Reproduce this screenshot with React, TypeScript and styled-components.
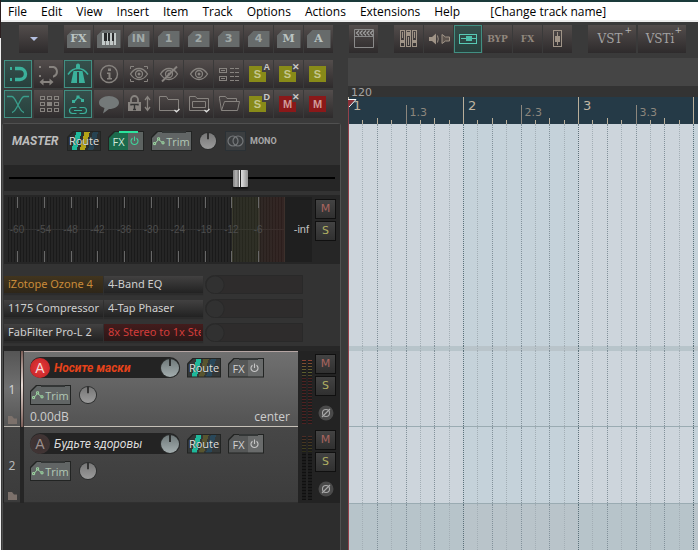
import React, { useEffect, useState } from "react";
import styled, { createGlobalStyle, css } from "styled-components";

const UI = `"Noto Sans", "Open Sans", sans-serif`;
const MENU = `"Open Sans", "Noto Sans", sans-serif`;
const WIDE = `"DejaVu Sans", sans-serif`;
const ARIAL = `"Liberation Sans", Arial, sans-serif`;
const NARROW = `Roboto, "Liberation Sans", sans-serif`;
const SERIF = `"DejaVu Serif", serif`;

const GlobalStyle = createGlobalStyle`
  * { box-sizing: border-box; }
  body { margin: 0; background: #2d2d2d; font-family: ${UI}; font-size: 12px; }
  button, input { font: inherit; color: inherit; margin: 0; padding: 0; border: 0; background: none; }
  button { cursor: pointer; }
  svg { display: block; }
`;

/* ---------- page frame ---------- */

const Page = styled.div`
  min-height: 100vh;
  display: flex;
  flex-direction: column;
  padding-left: 1px;
  overflow: hidden;
  background: linear-gradient(#2b1f20 38px, #f0f0f0 38px);
`;

const MenuBar = styled.nav`
  display: flex;
  gap: 14px;
  height: 22px;
  padding-left: 7px;
  border-top: 2px solid #1a3a3a;
  border-bottom: 2px solid #ededed;
  background: #fff;
  color: #000;
  font-family: ${MENU};
  overflow: hidden;
`;

const MenuItem = styled.button<{ $wide?: boolean }>`
  line-height: 20px;
  height: 20px;
  white-space: nowrap;
  margin-left: ${(p) => (p.$wide ? "16px" : "0")};
`;

const Toolbar = styled.div`
  display: flex;
  gap: 16px;
  height: 36px;
  padding: 3px 8px 0 18px;
  background: #3a3a3a;
  overflow: hidden;
`;

const Group = styled.div<{ $gap?: number }>`
  display: flex;
  gap: ${(p) => p.$gap ?? 1}px;
`;

const Workspace = styled.main`
  flex: 1;
  display: grid;
  grid-template-columns: 347px minmax(0, 1fr);
  background: #3a3a3a;
`;

const Left = styled.div`
  display: flex;
  flex-direction: column;
`;

const ActionGrid = styled.div`
  display: grid;
  grid-template-columns: repeat(11, 29px);
  gap: 2px 1px;
  padding: 2px 0 5px 3px;
`;

const ToolButton = styled.button<{ $on?: boolean; $w?: number }>`
  position: relative;
  display: flex;
  align-items: center;
  justify-content: center;
  flex: none;
  width: ${(p) => p.$w ?? 29}px;
  height: 28px;
  color: #87837f;
  background: linear-gradient(#534d4c, #2e2b2c);
  ${(p) =>
    p.$on &&
    css`
      width: 28px;
      color: #3bb09b;
      background: linear-gradient(#36504c, #26403c);
      box-shadow: inset 0 0 0 1px #418f82;
    `}
`;

const Plate = styled.span<{ $face?: "serif" | "sans"; $small?: boolean }>`
  display: flex;
  align-items: center;
  justify-content: center;
  width: ${(p) => (p.$small ? 22 : 24)}px;
  height: ${(p) => (p.$small ? 16 : 18)}px;
  background: #676b6b;
  color: ${(p) => (p.$small ? "#a0a8a7" : "#bac4c2")};
  clip-path: polygon(6px 0, 100% 0, 100% 100%, 0 100%, 0 6px);
  font: bold 11px/16px ${(p) => (p.$face === "sans" ? WIDE : SERIF)};
`;

const ToolText = styled.span`
  font: bold 9px/28px ${SERIF};
  color: #91877d;
`;

const VstText = styled.span`
  font: 12px/28px ${SERIF};
  color: #a3a2a2;
  margin-right: 4px;
`;

const Corner = styled.span`
  position: absolute;
  top: 0;
  right: 4px;
  font: 9px/11px ${WIDE};
  color: #b5b5b5;
`;

const Tag = styled.span<{ $red?: boolean; $notch?: boolean }>`
  display: flex;
  align-items: center;
  justify-content: center;
  width: 17px;
  height: 16px;
  margin-right: 2px;
  font: bold 11px/16px ${ARIAL};
  color: ${(p) => (p.$red ? "#d09a97" : "#c5c68c")};
  background: ${(p) => (p.$red ? "#8b1819" : "#888a18")};
  clip-path: ${(p) => (p.$notch ? "polygon(0 0, 13px 0, 13px 6px, 100% 6px, 100% 100%, 0 100%)" : "none")};
`;

const TagMark = styled.span`
  position: absolute;
  top: 2px;
  right: 3px;
  font: bold 9px/10px ${ARIAL};
  color: #c9c9c9;
`;

/* ---------- icons ---------- */

const Icon = ({ children, crisp }: { children: React.ReactNode; crisp?: boolean }) => (
  <svg
    width="28"
    height="28"
    viewBox="0 0 28 28"
    fill="none"
    stroke="currentColor"
    strokeWidth="1"
    shapeRendering={crisp ? "crispEdges" : "auto"}
    aria-hidden="true"
  >
    {children}
  </svg>
);

const SOLID = { fill: "currentColor", stroke: "none" } as const;

const EyeShape = () => (
  <>
    <path d="M5.500 14C8 10 11 8.500 14 8.500S20 10 22.500 14C20 18 17 19.500 14 19.500S8 18 5.500 14Z" strokeWidth="1.300" />
    <circle cx="14" cy="14" r="3.500" strokeWidth="1.300" />
    <circle cx="14" cy="14" r="1.500" {...SOLID} />
  </>
);

const SnapIcon = () => (
  <Icon>
    <path d="M11 8.500H16A5.500 5.500 0 0 1 16 19.500H11" strokeWidth="3.400" />
    <path d="M6 7h2v3H6zM6 18h2v3H6z" {...SOLID} />
  </Icon>
);
const RippleIcon = () => (
  <Icon>
    <path d="M14 7H18.500A5 5 0 0 1 18.500 16.500H18" strokeWidth="2" />
    <path d="M4 6h2v2H4zM4 15h2v2H4zM4.500 22l4-3.500V21h6v-2.500l4 3.500-4 3.500V23h-6v2.500z" {...SOLID} />
  </Icon>
);
const MetronomeIcon = () => (
  <Icon>
    <path d="M12 5.500a2 2 0 0 1 4 0V8h-4zM9.500 11H18.500L21 23H15V12H13V23H7Z" {...SOLID} />
    <path d="M4 14.500C7 10 10 8.500 14 8.500S21 10 24 14.500" strokeWidth="1.500" />
  </Icon>
);
const InfoIcon = () => (
  <Icon>
    <circle cx="14" cy="14" r="8.500" strokeWidth="1.400" />
    <path d="M13 8.500h3v2.500h-3zM12 12.500h3.500V18H17v1.500h-5V18h1.500v-4H12z" {...SOLID} />
  </Icon>
);
const FocusEyeIcon = () => (
  <Icon>
    <EyeShape />
    <path d="M5.500 9V6.500H9M19 6.500h3.500V9M5.500 19v2.500H9M19 21.500h3.500V19" />
  </Icon>
);
const HiddenEyeIcon = () => (
  <Icon>
    <EyeShape />
    <path d="M7 21.500L22 6.500" strokeWidth="2" />
  </Icon>
);
const EyeIcon = () => (
  <Icon>
    <EyeShape />
  </Icon>
);
const ListIcon = () => (
  <Icon crisp>
    <path d="M4.500 8.500h7v4h-7zM4.500 16.500h7v4h-7zM6 10.500h4M6 18.500h4M15 8.500h4M20 8.500h4M15 12.500h4M20 12.500h4M15 16.500h4M20 16.500h4M15 20.500h4M20 20.500h4" />
  </Icon>
);
const CrossfadeIcon = () => (
  <Icon>
    <path d="M3 6.500H8C12 7 15 22 20 22.500M25 6.500H20C16 7 13 22 8 22.500" stroke="#3a9d8b" strokeWidth="1.300" />
  </Icon>
);
const GridIcon = () => (
  <Icon crisp>
    <path d="M5.500 6.500h4v3h-4zM12.500 6.500h4v3h-4zM19.500 6.500h4v3h-4zM5.500 12.500h4v3h-4zM19.500 12.500h4v3h-4zM5.500 18.500h4v3h-4zM12.500 18.500h4v3h-4zM19.500 18.500h4v3h-4z" />
    <path d="M12 12h5v4h-5z" {...SOLID} />
  </Icon>
);
const EnvelopeLinkIcon = () => (
  <Icon>
    <path d="M10 12L14 7L19 10" strokeWidth="1.300" />
    <path d="M8 10h3v3H8zM12.500 5.500h3v3h-3zM17 9h3v3h-3z" {...SOLID} />
    <path d="M12.500 17.500H8.500a3 3 0 0 0 0 6h4M15.500 17.500h4a3 3 0 0 1 0 6h-4M10 20.500h8" strokeWidth="1.200" />
  </Icon>
);
const BubbleIcon = () => (
  <Icon>
    <path d="M14 6C19.500 6 24 9 24 12.700S19.500 19 14 19L8 23.500L9.500 18C6 17 4 15 4 12.700C4 9 8.500 6 14 6Z" {...SOLID} fill="#747979" />
  </Icon>
);
const LockIcon = () => (
  <Icon>
    <path d="M6 13V9.500a3.500 3.500 0 0 1 7 0V13" strokeWidth="1.800" />
    <path d="M3 12h13v9H3z" {...SOLID} />
    <path d="M6 15.500V14.500H13V15.500M9.500 14.500V19.500M8 19.500h3" stroke="#333" strokeWidth="1.400" />
    <path d="M22.500 7V20M20 10L22.500 6.500L25 10M20 17L22.500 20.500L25 17" strokeWidth="1.300" />
  </Icon>
);
const FolderIcon = () => (
  <Icon>
    <path d="M4.500 20.500V6.500H11.500L13 9.500H23.500V20.500H4.500Z" />
    <path d="M19.500 20L21.500 22L24.500 19" stroke="#ddd" strokeWidth="1.200" />
  </Icon>
);
const FolderWindowIcon = () => (
  <Icon>
    <path d="M4.500 20.500V6.500H10.500L12 8.500H23.500V20.500ZM7.500 11.500h13v6h-13z" />
    <path d="M19.500 20L21.500 22L24.500 19" stroke="#ddd" strokeWidth="1.200" />
  </Icon>
);
const OpenFolderIcon = () => (
  <Icon>
    <path d="M6.500 20.500L4.500 8.500V6.500H10.500L12 8.500H21.500V11.500M6.500 20.500H22.500L24.500 11.500H9.500Z" />
  </Icon>
);
const KeysIcon = () => (
  <svg width="14" height="12" viewBox="0 0 14 12" shapeRendering="crispEdges" aria-hidden="true">
    <path d="M0 0h14v12H0z" fill="#c2c9c8" />
    <path d="M2 0h3v8H2zM6 0h2v8H6zM10 0h2v8h-2z" fill="#282a2b" />
    <path d="M3 8h1v4H3zM7 8h1v4H7zM11 8h1v4h-1z" fill="#777" />
  </svg>
);
const CaretIcon = () => (
  <svg width="8" height="4" viewBox="0 0 8 4" aria-hidden="true">
    <path d="M0 0H8L4 4Z" fill="#b4bfe0" />
  </svg>
);
const ClapperIcon = () => (
  <Icon>
    <path d="M4.500 4.500h19v18h-19zM4 11.500h20" stroke="#8a8a8a" />
    <path d="M9 5.500l-2.500 2.500 2.500 2.500M12.500 5.500l-2.500 2.500 2.500 2.500M16 5.500l-2.500 2.500 2.500 2.500M19.500 5.500l-2.500 2.500 2.500 2.500M23 5.500l-2.500 2.500 2.500 2.500" stroke="#a0a0a0" strokeWidth="1.200" />
  </Icon>
);
const MixerIcon = () => (
  <Icon crisp>
    <path d="M5.500 5.500h4v16h-4zM11.500 5.500h4v16h-4zM17.500 5.500h4v16h-4z" stroke="#a09487" />
    <path d="M7 7h1v6H7zM6 15h3v3H6zM13 12h1v8h-1zM12 7h3v4h-3zM19 7h1v6h-1zM18 15h3v3h-3z" fill="#a09487" stroke="none" />
  </Icon>
);
const SpeakersIcon = () => (
  <Icon>
    <path d="M4 12h3l4-3.500v11L7 16H4z" fill="#a09487" stroke="none" />
    <path d="M12.500 10.500q1.500 3.500 0 7" stroke="#a09487" />
    <path d="M17 9.500l3.500 2.500h4v4h-4L17 18.500z" stroke="#a09487" fill="#5c534d" />
  </Icon>
);
const SliderBoxIcon = () => (
  <Icon crisp>
    <path d="M5.500 9.500h17v9h-17zM7 13.500h5M18 13.500h4" stroke="#58c9b4" />
    <path d="M12 11h6v5h-6z" fill="#4dbfaa" stroke="none" />
  </Icon>
);
const FaderBoxIcon = () => (
  <Icon crisp>
    <path d="M9.500 5.500h8v16h-8zM13.500 7v13" stroke="#a09487" />
    <path d="M11 11h5v6h-5z" fill="#a09487" stroke="none" />
  </Icon>
);
const TrimIcon = () => (
  <svg width="12" height="9" viewBox="0 0 12 9" fill="none" stroke="#9fd8a5" strokeWidth="1" aria-hidden="true">
    <path d="M2 6.500L5.500 2.500L10 6" />
    <path d="M.6 5.600h2v2h-2zM4.600 .8h2v2h-2zM9 4.800h2v2H9z" fill="#5b6a5c" />
  </svg>
);
const PowerIcon = () => (
  <svg width="9" height="10" viewBox="0 0 9 10" fill="none" stroke="currentColor" strokeWidth="1.100" aria-hidden="true">
    <path d="M2.500 2.200A3.500 3.500 0 1 0 6.500 2.200M4.500 .5V5" />
  </svg>
);
const MonoIcon = () => (
  <svg width="17" height="12" viewBox="0 0 17 12" fill="none" stroke="#75787a" strokeWidth="1.200" aria-hidden="true">
    <circle cx="6" cy="6" r="5" />
    <circle cx="11" cy="6" r="5" />
  </svg>
);
const FolderMark = () => (
  <svg width="9" height="8" viewBox="0 0 9 8" aria-hidden="true">
    <path d="M0 0H4L6 2.500H9V8H0Z" fill="#7c716b" />
  </svg>
);
const PhaseIcon = () => (
  <svg width="16" height="16" viewBox="0 0 16 16" fill="none" aria-hidden="true">
    <circle cx="8" cy="8" r="7.500" fill="#4a4a4a" />
    <circle cx="8" cy="8" r="3.500" stroke="#aaa" strokeWidth="1.100" />
    <path d="M4 12L12 4" stroke="#aaa" strokeWidth="1.100" />
  </svg>
);

/* ---------- shared panel controls ---------- */

const Chamfer = styled.button<{ $w: number }>`
  position: relative;
  display: flex;
  flex: none;
  align-items: center;
  justify-content: center;
  width: ${(p) => p.$w}px;
  height: 20px;
  padding: 1px;
  background: #222423;
  clip-path: polygon(6px 0, 100% 0, 100% 100%, 0 100%, 0 6px);
`;

const Face = styled.span`
  flex: 1;
  height: 18px;
  display: flex;
  align-items: center;
  justify-content: center;
  overflow: hidden;
  clip-path: polygon(6px 0, 100% 0, 100% 100%, 0 100%, 0 6px);
`;

const RouteFace = styled(Face)<{ $bright?: boolean }>`
  color: #e2e2e2;
  font: 11px/16px ${MENU};
  text-shadow: 0 0 1px #111;
  background: ${(p) =>
    p.$bright
      ? "linear-gradient(105deg, #2b2f2f 8px, #1fb99b 8px, #1fb99b 13px, #2b2f2f 13px, #2b2f2f 16px, #b3a318 16px, #b3a318 21px, #2b2f2f 21px, #2b2f2f 24px, #274352 24px, #274352 29px, #2b2f2f 29px)"
      : "linear-gradient(105deg, #343838 8px, #1fb99b 8px, #1fb99b 13px, #343838 13px, #343838 15px, #58552f 15px, #58552f 20px, #343838 20px, #343838 22px, #29485a 22px, #29485a 27px, #343838 27px)"};
`;

const FxFace = styled(Face)<{ $on?: boolean }>`
  padding-top: 2px;
  font: 11px/18px ${MENU};
  color: ${(p) => (p.$on ? "#cfe6da" : "#d0d0d0")};
  background: ${(p) =>
    p.$on ? "linear-gradient(90deg, #1c6a4c 19px, #5d6361 19px)" : "linear-gradient(90deg, #555757 19px, #696b6b 19px)"};
  span { flex: 1; text-align: center; }
  svg { margin: 0 4px 2px 2px; color: ${(p) => (p.$on ? "#3fd49a" : "#c5c5c5")}; }
`;

const TrimFace = styled(Face)`
  gap: 1px;
  padding-top: 1px;
  color: #b2c8b5;
  font: 11px/16px ${MENU};
  background: #616565;
`;

const Lamp = styled.i<{ $on?: boolean }>`
  position: absolute;
  top: 0;
  left: 11px;
  right: 6px;
  height: 2px;
  background: ${(p) => (p.$on ? "#2be39d" : "#333636")};
`;

const RouteButton = ({ bright }: { bright?: boolean }) => (
  <Chamfer $w={34}>
    <RouteFace $bright={bright}>Route</RouteFace>
  </Chamfer>
);
const FxButton = ({ on }: { on?: boolean }) => (
  <Chamfer $w={36}>
    <FxFace $on={on}>
      <span>FX</span>
      <PowerIcon />
    </FxFace>
    <Lamp $on={on} />
  </Chamfer>
);
const TrimButton = () => (
  <Chamfer $w={41}>
    <TrimFace>
      <TrimIcon />
      Trim
    </TrimFace>
    <Lamp />
  </Chamfer>
);

const KnobWrap = styled.label`
  position: relative;
  flex: none;
  input { position: absolute; inset: 0; width: 100%; height: 100%; opacity: 0; }
`;

const Knob = ({ size, label, cool }: { size: number; label: string; cool?: boolean }) => (
  <KnobWrap>
    <svg width={size} height={size} viewBox="0 0 20 20" aria-hidden="true">
      <defs>
        <linearGradient id={cool ? "coolKnob" : "plainKnob"} x1="0" y1="0" x2="0" y2="1">
          <stop offset="0" stopColor={cool ? "#6f797a" : "#777"} />
          <stop offset="1" stopColor={cool ? "#a3adae" : "#9b9b9b"} />
        </linearGradient>
      </defs>
      <circle cx="10" cy="10" r="10" fill="#2b2d2d" />
      <circle cx="10" cy="10" r="9" fill={cool ? "url(#coolKnob)" : "url(#plainKnob)"} />
      <path d="M10 1V8" stroke="#181818" strokeWidth="1.600" />
    </svg>
    <input type="range" aria-label={label} />
  </KnobWrap>
);

const MiniButton = styled.button<{ $tone: "mute" | "solo" }>`
  display: block;
  width: 21px;
  height: 20px;
  border: 1px solid #101010;
  background: linear-gradient(#434343, #303030);
  font: 11px/18px ${WIDE};
  color: ${(p) => (p.$tone === "mute" ? "#a8645e" : "#b0af62")};
`;

/* ---------- master panel ---------- */

const Panel = styled.section`
  flex: 1;
  display: flex;
  flex-direction: column;
  margin: 0 7px 0 1px;
  border: 1px solid #505050;
  border-bottom: 0;
  border-radius: 3px 3px 0 0;
  background: #2d2d2d;
`;

const Master = styled.div`
  background: #333;
  padding-left: 1px;
  border-bottom: 5px solid #272727;
`;

const MasterHead = styled.div`
  display: flex;
  align-items: center;
  height: 41px;
  padding: 0 0 7px 8px;
`;

const MasterTitle = styled.h1`
  margin: 0;
  width: 55px;
  font: italic bold 12px/20px ${NARROW};
  color: #bdbdbd;
`;

const HeadControls = styled.div`
  display: flex;
  align-items: center;
  gap: 7px;
`;

const MonoButton = styled.button`
  display: flex;
  align-items: center;
  gap: 4px;
  margin-left: 1px;
  font: bold 9px/20px ${NARROW};
  color: #a8a8a8;
  span { display: grid; place-items: center; width: 21px; height: 20px; background: #3b3e40; border: 1px solid #2b3135; }
`;

const FaderRow = styled.div`
  height: 26px;
  padding: 0 5px;
  background: #262626;
`;

const Fader = styled.input`
  -webkit-appearance: none;
  appearance: none;
  display: block;
  width: 100%;
  height: 26px;
  background: linear-gradient(transparent 12px, #000 12px, #000 14px, transparent 14px);
  &::-webkit-slider-thumb {
    -webkit-appearance: none;
    width: 15px;
    height: 17px;
    border-radius: 1px;
    box-shadow: 0 2px 2px #111;
    background: linear-gradient(90deg, #8b8b8b 1px, #b5b5b5 3px, #777 6px, #eee 6px, #eee 7px, #222 7px, #222 8px, #ddd 8px, #ccc 10px, #999 14px);
  }
`;

const MeterRow = styled.div`
  display: flex;
  gap: 3px;
  height: 69px;
  margin-top: 4px;
  padding: 2px 4px 2px 4px;
  background: #262626;
`;

const Meter = styled.div`
  flex: 1;
  display: flex;
  height: 65px;
  padding-left: 9px;
  background:
    linear-gradient(90deg, transparent 224px, #4a4a38 224px, rgba(70, 72, 40, 0.25) 225px, rgba(70, 72, 40, 0.3) 250px, #48443a 251px, rgba(80, 50, 38, 0.25) 252px, rgba(85, 38, 32, 0.3) 276px, #5a4137 276px, #1f1f1f 277px),
    linear-gradient(transparent 32px, #303030 32px, #303030 33px, transparent 33px),
    repeating-linear-gradient(90deg, #1a1a1a 0, #1a1a1a 1px, #252525 1px, #252525 3px);
`;

const Scale = styled.div`
  flex: 1;
  display: flex;
`;

const ScaleMark = styled.div`
  flex: 1;
  display: flex;
  flex-direction: column;
  justify-content: space-between;
  i { width: 1px; height: 11px; background: #686868; }
  span { width: 24px; margin-left: -12px; text-align: center; font: 10px/12px ${ARIAL}; color: #4c4c4c; }
`;

const Peak = styled.output`
  width: 27px;
  padding-right: 3px;
  text-align: right;
  font: 11px/64px ${ARIAL};
  color: #c0c0c0;
`;

const ButtonStack = styled.div`
  display: flex;
  flex-direction: column;
  align-items: center;
  gap: 2px;
  padding-top: 2px;
`;

const FxList = styled.div`
  display: grid;
  grid-template-columns: repeat(3, 99px);
  gap: 7px 1px;
  padding: 12px 0 5px;
`;

const FxSlot = styled.button<{ $tone?: "amber" | "red" }>`
  display: flex;
  height: 17px;
  padding: 0 2px 0 4px;
  font: 11px/16px ${UI};
  box-shadow: 0 2px 1px #2b2b2b;
  color: ${(p) => (p.$tone === "amber" ? "#c98b3a" : p.$tone === "red" ? "#d23d3b" : "#cfcfcf")};
  background: ${(p) =>
    p.$tone === "amber"
      ? "linear-gradient(#42351e, #2e2618)"
      : p.$tone === "red"
        ? "linear-gradient(#431c1c, #2c1717)"
        : "linear-gradient(#424141, #222)"};
  span { flex: 1; min-width: 0; overflow: hidden; text-align: left; white-space: nowrap; }
`;

const EmptySlot = styled.button`
  height: 19px;
  margin: -1px 0;
  margin-left: 1px;
  border: 1px solid #292929;
  border-radius: 10px 0 0 10px;
  background: radial-gradient(circle at 9px 9px, #313131 8px, #282828 9px, #2e2c2c 10px);
`;

/* ---------- tracks ---------- */

const TrackRow = styled.article<{ $selected?: boolean }>`
  display: grid;
  grid-template-columns: 16px 4px minmax(0, 1fr) 42px;
  min-height: 76px;
  padding-left: 1px;
  color: ${(p) => (p.$selected ? "#d2d2d2" : "#b8b8b8")};
  background: #232323;
`;

const NumberCell = styled.div<{ $selected?: boolean }>`
  display: flex;
  flex-direction: column;
  justify-content: flex-end;
  align-items: center;
  gap: 18px;
  padding-bottom: 2px;
  font: 12px/16px ${UI};
  border-bottom: 1px solid ${(p) => (p.$selected ? "#b5b0a8" : "#303030")};
  background: ${(p) => (p.$selected ? "linear-gradient(#555, #707070 50%, #555)" : "linear-gradient(#444, #3b3b3b)")};
`;

const Divider = styled.div<{ $selected?: boolean }>`
  background: #252525;
  ${(p) =>
    p.$selected &&
    css`
      background: linear-gradient(#7a5d57, #e8dcd6 45%, #7a5d57);
      border-left: 1px solid #252525;
      border-right: 1px solid #3a3332;
    `}
`;

const TrackBody = styled.div<{ $selected?: boolean }>`
  display: flex;
  flex-direction: column;
  gap: 7px;
  padding: 5px 8px 0 6px;
  border-top: 1px solid ${(p) => (p.$selected ? "#b5a5a3" : "#474747")};
  border-bottom: 1px solid ${(p) => (p.$selected ? "#c6c1b8" : "#303030")};
  background: ${(p) => (p.$selected ? "linear-gradient(#707070, #535353)" : "linear-gradient(#474747, #3c3c3c)")};
`;

const TrackLine = styled.div<{ $gap: number }>`
  display: flex;
  align-items: center;
  gap: ${(p) => p.$gap}px;
`;

const NameBar = styled.div`
  display: flex;
  align-items: center;
  width: 150px;
  height: 21px;
  border-radius: 11px;
  background: #232323;
`;

const ArmButton = styled.button<{ $armed?: boolean }>`
  flex: none;
  width: 20px;
  height: 20px;
  border-radius: 50%;
  font: 14px/18px ${ARIAL};
  color: ${(p) => (p.$armed ? "#f3dada" : "#9b8f8e")};
  background: ${(p) => (p.$armed ? "radial-gradient(#e8393a, #bd2225)" : "radial-gradient(#3a2f2f, #443737)")};
`;

const NameInput = styled.input<{ $armed?: boolean }>`
  flex: 1;
  min-width: 0;
  padding-left: 4px;
  outline: 0;
  font: italic ${(p) => (p.$armed ? "bold" : "normal")} 12px/20px ${NARROW};
  color: ${(p) => (p.$armed ? "#e5421a" : "#dadada")};
`;

const VolumeLine = styled.div`
  display: flex;
  justify-content: space-between;
  margin-top: -3px;
  font: 12px/16px ${MENU};
  color: #cdcdcd;
`;

const Side = styled.div`
  display: flex;
  gap: 3px;
  padding-left: 4px;
`;

const TrackMeter = styled.div<{ $lit?: boolean }>`
  width: 10px;
  margin: 9px 0 3px;
  background:
    linear-gradient(90deg, transparent 4px, #232323 4px, #232323 6px, transparent 6px),
    repeating-linear-gradient(transparent 0, transparent 1px, #1c1c1c 1px, #1c1c1c 3px),
    ${(p) =>
      p.$lit
        ? "linear-gradient(#8a4034, #6a5a30 8px, #56602f 14px, #4d2222 18px, #4d2222)"
        : "linear-gradient(#4d2c26, #40401f 14px, #101010 18px, #101010)"};
`;

const SideButtons = styled(ButtonStack)`
  padding-top: 3px;
`;

const PhaseButton = styled.button`
  margin-top: 7px;
`;

/* ---------- arrange view ---------- */

const BAR = 115;
const LEFT_WIDTH = 348;

const Arrange = styled.section`
  position: relative;
  display: flex;
  flex-direction: column;
  overflow: hidden;
  padding-top: 28px;
  background: #454545;
`;

const Tempo = styled.div`
  height: 11px;
  padding-left: 3px;
  background: #333;
  color: #a4a4a4;
  font: 11px/13px ${WIDE};
`;

const BarStrip = styled.div`
  display: flex;
  overflow: hidden;
`;

const Ruler = styled(BarStrip)`
  height: 27px;
  background: #253a47;
`;

const RulerBar = styled.div`
  flex: 0 0 ${BAR}px;
  display: grid;
  grid-template-columns: repeat(8, minmax(0, 1fr));
  align-items: end;
`;

const Tick = styled.div<{ $level: number }>`
  height: ${(p) => [27, 19, 6, 4][p.$level]}px;
  border-left: 1px solid ${(p) => ["#b9ae9a", "#8c867d", "#b9ae9a", "#b9ae9a"][p.$level]};
  padding-left: ${(p) => (p.$level === 0 ? 4 : 3)}px;
  white-space: nowrap;
  font: ${(p) => (p.$level === 0 ? "13px/18px" : "11px/15px")} ${WIDE};
  color: ${(p) => (p.$level === 0 ? "#c0b5a1" : "#8c867d")};
`;

const Lane = styled(BarStrip)<{ $h?: number; $shade?: boolean; $line?: boolean }>`
  flex: ${(p) => (p.$h ? `0 0 ${p.$h}px` : "1 0 20px")};
  border-bottom: ${(p) => (p.$line ? "1px solid #9aabb2" : "0")};
  --odd: ${(p) => (p.$shade ? "#b7c4ca" : "#cdd5dc")};
  --even: ${(p) => (p.$shade ? "#b9c4ca" : "#c5d2da")};
  background: var(--odd);
`;

const LaneBar = styled.div`
  flex: 0 0 ${BAR}px;
  display: grid;
  grid-template-columns: repeat(8, minmax(0, 1fr));
  background: var(--odd);
  &:nth-child(even) { background: var(--even); }
`;

const GridLine = styled.i<{ $level: number }>`
  border-left: 1px dotted ${(p) => ["#5c717a", "#82919a", "#82919a", "#a3aeb5"][p.$level]};
`;

const Playhead = styled.div`
  position: absolute;
  top: 41px;
  bottom: 0;
  left: 0;
  width: 1px;
  background: #93404a;
`;

const LEVELS = [0, 3, 2, 3, 1, 3, 2, 3];

const barsInView = () => Math.max(1, Math.ceil((window.innerWidth - LEFT_WIDTH) / BAR));

const useBars = () => {
  const [count, setCount] = useState(barsInView);
  useEffect(() => {
    const update = () => setCount(barsInView());
    window.addEventListener("resize", update);
    return () => window.removeEventListener("resize", update);
  }, []);
  return Array.from({ length: count }, (_, i) => i + 1);
};

const LaneGrid = ({ bars, height, shade, line }: { bars: number[]; height?: number; shade?: boolean; line?: boolean }) => (
  <Lane $h={height} $shade={shade} $line={line}>
    {bars.map((bar) => (
      <LaneBar key={bar}>
        {LEVELS.map((level, i) => (
          <GridLine key={i} $level={level} />
        ))}
      </LaneBar>
    ))}
  </Lane>
);

/* ---------- data ---------- */

const MENUS = ["File", "Edit", "View", "Insert", "Item", "Track", "Options", "Actions", "Extensions", "Help"];

const ACTIONS: { label: string; icon: React.ReactNode; on?: boolean }[] = [
  { label: "Snap", icon: <SnapIcon />, on: true },
  { label: "Ripple edit", icon: <RippleIcon /> },
  { label: "Metronome", icon: <MetronomeIcon />, on: true },
  { label: "Project info", icon: <InfoIcon /> },
  { label: "Focus view", icon: <FocusEyeIcon /> },
  { label: "Hide", icon: <HiddenEyeIcon /> },
  { label: "Show", icon: <EyeIcon /> },
  { label: "Track list", icon: <ListIcon /> },
  { label: "Solo all", icon: <><Tag $notch>S</Tag><TagMark>A</TagMark></> },
  { label: "Clear solo", icon: <><Tag $notch>S</Tag><TagMark>✕</TagMark></> },
  { label: "Solo", icon: <Tag>S</Tag> },
  { label: "Crossfade", icon: <CrossfadeIcon />, on: true },
  { label: "Grid", icon: <GridIcon /> },
  { label: "Envelopes follow items", icon: <EnvelopeLinkIcon />, on: true },
  { label: "Notes", icon: <BubbleIcon /> },
  { label: "Lock height", icon: <LockIcon /> },
  { label: "Folder", icon: <FolderIcon /> },
  { label: "Folder window", icon: <FolderWindowIcon /> },
  { label: "Open folder", icon: <OpenFolderIcon /> },
  { label: "Solo defeat", icon: <><Tag $notch>S</Tag><TagMark>D</TagMark></> },
  { label: "Clear mute", icon: <><Tag $red $notch>M</Tag><TagMark>✕</TagMark></> },
  { label: "Mute", icon: <Tag $red>M</Tag> },
];

const SLOTS: { name: string; tone?: "amber" | "red" }[][] = [
  [{ name: "iZotope Ozone 4", tone: "amber" }, { name: "4-Band EQ" }],
  [{ name: "1175 Compressor" }, { name: "4-Tap Phaser" }],
  [{ name: "FabFilter Pro-L 2" }, { name: "8x Stereo to 1x Ste", tone: "red" }],
];

const DB = ["-60", "-54", "-48", "-42", "-36", "-30", "-24", "-18", "-12", "-6"];

const TRACKS = [
  { id: 1, name: "Носите маски", selected: true, volume: "0.00dB", pan: "center" },
  { id: 2, name: "Будьте здоровы", selected: false },
];

export default function App() {
  const bars = useBars();
  return (
    <>
      <GlobalStyle />
      <Page>
        <MenuBar>
          {MENUS.map((m) => (
            <MenuItem key={m}>{m}</MenuItem>
          ))}
          <MenuItem $wide>[Change track name]</MenuItem>
        </MenuBar>

        <Toolbar>
          <ToolButton aria-label="Toolbar menu"><CaretIcon /></ToolButton>
          <Group>
            <ToolButton><Plate>FX</Plate></ToolButton>
            <ToolButton aria-label="Keyboard"><Plate><KeysIcon /></Plate></ToolButton>
            {["IN", "1", "2", "3", "4"].map((t) => (
              <ToolButton key={t}><Plate $small $face="sans">{t}</Plate></ToolButton>
            ))}
            <ToolButton><Plate>M</Plate></ToolButton>
            <ToolButton><Plate>A</Plate></ToolButton>
          </Group>
          <ToolButton aria-label="Video"><ClapperIcon /></ToolButton>
          <Group>
            <ToolButton aria-label="Mixer"><MixerIcon /></ToolButton>
            <ToolButton aria-label="Monitoring"><SpeakersIcon /></ToolButton>
            <ToolButton aria-label="Sliders" $on><SliderBoxIcon /></ToolButton>
            <ToolButton><ToolText>BYP</ToolText></ToolButton>
            <ToolButton><ToolText>FX</ToolText></ToolButton>
            <ToolButton aria-label="Fader"><FaderBoxIcon /></ToolButton>
          </Group>
          <Group $gap={2}>
            <ToolButton $w={48}><VstText>VST</VstText><Corner>+</Corner></ToolButton>
            <ToolButton $w={48}><VstText>VSTi</VstText><Corner>+</Corner></ToolButton>
          </Group>
        </Toolbar>

        <Workspace>
          <Left>
            <ActionGrid>
              {ACTIONS.map((a) => (
                <ToolButton key={a.label} aria-label={a.label} $on={a.on}>{a.icon}</ToolButton>
              ))}
            </ActionGrid>

            <Panel>
              <Master>
                <MasterHead>
                  <MasterTitle>MASTER</MasterTitle>
                  <HeadControls>
                    <RouteButton bright />
                    <FxButton on />
                    <TrimButton />
                    <Knob size={18} label="Master pan" />
                    <MonoButton><span><MonoIcon /></span>MONO</MonoButton>
                  </HeadControls>
                </MasterHead>
                <FaderRow>
                  <Fader type="range" min={0} max={100} defaultValue={72} aria-label="Master volume" />
                </FaderRow>
                <MeterRow>
                  <Meter>
                    <Scale>
                      {DB.map((d) => (
                        <ScaleMark key={d}><i /><span>{d}</span><i /></ScaleMark>
                      ))}
                    </Scale>
                    <Peak>-inf</Peak>
                  </Meter>
                  <ButtonStack>
                    <MiniButton $tone="mute">M</MiniButton>
                    <MiniButton $tone="solo">S</MiniButton>
                  </ButtonStack>
                </MeterRow>
                <FxList>
                  {SLOTS.map((row, i) => (
                    <React.Fragment key={i}>
                      {row.map((s) => (
                        <FxSlot key={s.name} $tone={s.tone}><span>{s.name}</span></FxSlot>
                      ))}
                      <EmptySlot aria-label="Empty send" />
                    </React.Fragment>
                  ))}
                </FxList>
              </Master>

              {TRACKS.map((t) => (
                <TrackRow key={t.id} $selected={t.selected}>
                  <NumberCell $selected={t.selected}>
                    {t.id}
                    <FolderMark />
                  </NumberCell>
                  <Divider $selected={t.selected} />
                  <TrackBody $selected={t.selected}>
                    <TrackLine $gap={7}>
                      <NameBar>
                        <ArmButton $armed={t.selected}>A</ArmButton>
                        <NameInput $armed={t.selected} defaultValue={t.name} aria-label="Track name" />
                        <Knob size={20} label="Volume" cool />
                      </NameBar>
                      <RouteButton />
                      <FxButton />
                    </TrackLine>
                    <TrackLine $gap={8}>
                      <TrimButton />
                      <Knob size={18} label="Pan" />
                    </TrackLine>
                    {t.volume && (
                      <VolumeLine>
                        <span>{t.volume}</span>
                        <span>{t.pan}</span>
                      </VolumeLine>
                    )}
                  </TrackBody>
                  <Side>
                    <TrackMeter $lit={t.selected} />
                    <SideButtons>
                      <MiniButton $tone="mute">M</MiniButton>
                      <MiniButton $tone="solo">S</MiniButton>
                      <PhaseButton aria-label="Phase"><PhaseIcon /></PhaseButton>
                    </SideButtons>
                  </Side>
                </TrackRow>
              ))}
            </Panel>
          </Left>

          <Arrange>
            <Tempo>120</Tempo>
            <Ruler>
              {bars.map((bar) => (
                <RulerBar key={bar}>
                  {LEVELS.map((level, i) => (
                    <Tick key={i} $level={level}>
                      {level === 0 ? bar : level === 1 ? `${bar}.3` : null}
                    </Tick>
                  ))}
                </RulerBar>
              ))}
            </Ruler>
            <LaneGrid bars={bars} height={222} />
            <LaneGrid bars={bars} height={5} shade />
            <LaneGrid bars={bars} height={76} line />
            <LaneGrid bars={bars} height={77} line />
            <LaneGrid bars={bars} shade />
            <Playhead>
              <svg width="9" height="9" viewBox="0 0 9 9" aria-hidden="true">
                <path d="M0 0H8L0 8Z" fill="#8c3038" />
                <path d="M0 .5H8L1 8" fill="none" stroke="#fff" />
              </svg>
            </Playhead>
          </Arrange>
        </Workspace>
      </Page>
    </>
  );
}
